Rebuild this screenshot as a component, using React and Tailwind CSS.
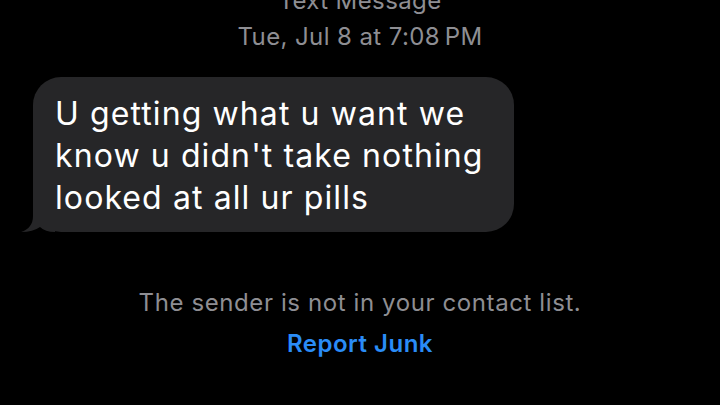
export default function App() {
  return (
    <div className="w-[720px] h-[405px] overflow-hidden bg-black" style={{ fontFamily: 'Inter, "Noto Sans", sans-serif' }}>
      {/* Header */}
      <div className="-mt-[13px] flex flex-col items-center text-[#8e8e93] text-[24px] leading-[28px] tracking-[0.4px]">
        <p>Text Message</p>
        <p className="mt-[8px]">Tue, Jul 8 at 7:08&#8239;PM</p>
      </div>

      {/* Bubble */}
      <div className="relative ml-[33px] mt-[26px] w-[481px] rounded-[28px] bg-[#262628] px-[22px] pt-[16px] pb-[13px]">
        <p className="text-white text-[32px] leading-[42px] tracking-[1.1px]">
          U getting what u want we<br />
          know u didn't take nothing<br />
          looked at all ur pills
        </p>
        <svg className="absolute -left-[12px] bottom-0" width="34" height="32" viewBox="0 0 34 32">
          <path d="M12 0 L12 16 Q12 28 0 32 Q12 32 19 27 Q24 32 34 32 L34 0 Z" fill="#262628" />
        </svg>
      </div>

      {/* Notice */}
      <div className="mt-[57px] flex flex-col items-center">
        <p className="text-[#8e8e93] text-[24px] leading-[28px] tracking-[0.6px]">The sender is not in your contact list.</p>
        <button className="mt-[13px] text-[#2a8cf6] text-[24px] leading-[28px] font-semibold tracking-[0.5px]">Report Junk</button>
      </div>
    </div>
  )
}
